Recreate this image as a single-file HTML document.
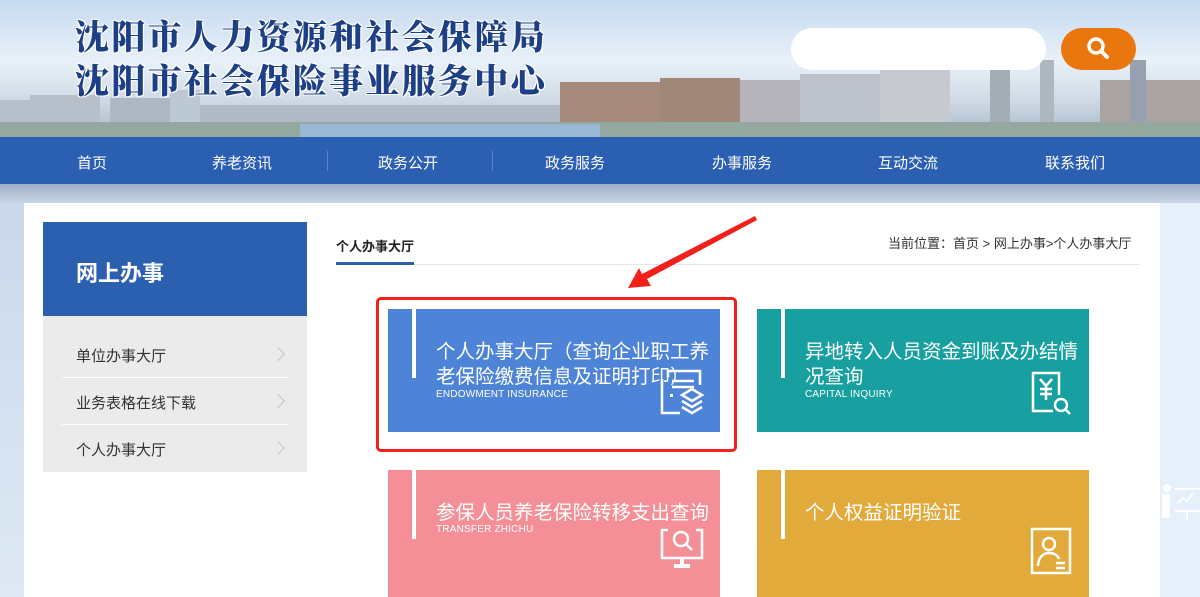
<!DOCTYPE html>
<html><head><meta charset="utf-8">
<style>
*{margin:0;padding:0;box-sizing:border-box}
body{width:1200px;height:597px;overflow:hidden;position:relative;font-family:"Liberation Sans","Noto Sans CJK SC",sans-serif;background:#e6f0fa}
.hdr{position:absolute;left:0;top:0;width:1200px;height:137px;background:linear-gradient(180deg,#c6daf0 0%,#e9f1f9 45%,#d3dde8 70%,#a8b8c8 100%)}
.city{position:absolute;left:0;top:60px;width:1200px;height:77px}
.t1{position:absolute;left:75px;font-family:"Noto Serif CJK SC",serif;font-weight:900;font-size:34px;color:#1d3f86;letter-spacing:2.3px;text-shadow:1px 1px 0 #fff,-1px -1px 0 #fff,1px -1px 0 #fff,-1px 1px 0 #fff}
.search{position:absolute;left:791px;top:28px;width:255px;height:42px;background:#fff;border-radius:21px}
.sbtn{position:absolute;left:1061px;top:28px;width:75px;height:42px;background:#ea760e;border-radius:21px}
.nav{position:absolute;left:0;top:137px;width:1200px;height:47px;background:#2a5fb2;color:#fff;font-size:15px}
.nav span{position:absolute;top:15px}
.nav i{position:absolute;top:14px;width:1px;height:20px;background:#5a82c4}
.haze{position:absolute;left:0;top:184px;width:1200px;height:19px;background:linear-gradient(180deg,#9fb0c6,#c8d5e6)}
.leftbg{position:absolute;left:0;top:203px;width:24px;height:394px;background:linear-gradient(180deg,#c9d8ea,#dfe9f5)}
.panel{position:absolute;left:24px;top:203px;width:1136px;height:394px;background:#fff}
.side{position:absolute;left:43px;top:222px;width:264px;height:94px;background:#2b5fb0;color:#fff;font-size:22px;font-weight:bold;padding:34px 0 0 33px}
.list{position:absolute;left:43px;top:316px;width:264px;height:156px;background:#ebebeb}
.li{position:absolute;left:33px;font-size:15px;color:#333}
.chev{position:absolute;left:230px;width:10px;height:10px;border-right:1.5px solid #c4c4c4;border-top:1.5px solid #c4c4c4;transform:rotate(45deg)}
.sep{position:absolute;left:19px;width:226px;height:1px;background:#fff}
.tab{position:absolute;left:336px;top:236px;font-size:13px;font-weight:bold;color:#222}
.card{position:absolute;width:332px;color:#fff}
.card .bar{position:absolute;left:24px;top:0;width:4px;height:69px;background:#fff}
.card .tx{position:absolute;left:48px;font-size:19.5px;line-height:25px;white-space:nowrap}
.card .en{position:absolute;left:48px;font-size:10px;letter-spacing:.2px}
.card svg{position:absolute}
</style></head><body>
<div class="hdr">
<svg class="city" viewBox="0 0 1200 77" preserveAspectRatio="none">
<g fill="#a6a5ab">
<rect x="0" y="40" width="40" height="37" fill="#b7bfca"/><rect x="30" y="35" width="70" height="42" fill="#b7bfca"/><rect x="110" y="38" width="60" height="39" fill="#aeb8c4"/><rect x="170" y="30" width="30" height="47" fill="#bcc8d4"/>
<rect x="560" y="22" width="100" height="55" fill="#a58a7c"/><rect x="660" y="18" width="80" height="59" fill="#a08878"/><rect x="740" y="20" width="60" height="57" fill="#b4b4ba"/>
<rect x="800" y="14" width="80" height="63" fill="#bec2ca"/><rect x="880" y="10" width="70" height="67" fill="#c6cad0"/><rect x="990" y="5" width="20" height="72" fill="#a4acb6"/><rect x="1040" y="-10" width="14" height="87" fill="#aeb6c0"/>
<rect x="1100" y="20" width="100" height="57" fill="#aaa4a4"/><rect x="1130" y="-5" width="16" height="82" fill="#96a0ae"/>
<rect x="200" y="45" width="360" height="32" fill="#b0b9c4"/>
</g>
<rect x="0" y="62" width="1200" height="15" fill="#94a8a0"/>
<rect x="300" y="64" width="300" height="13" fill="#9ab8d6"/>
</svg>
<div class="t1" style="top:10px">沈阳市人力资源和社会保障局</div>
<div class="t1" style="top:54px">沈阳市社会保险事业服务中心</div>
<div class="search"></div>
<div class="sbtn"><svg width="75" height="42"><circle cx="35" cy="18" r="7" fill="none" stroke="#fff" stroke-width="3.5"/><line x1="40" y1="23" x2="46" y2="29" stroke="#fff" stroke-width="4" stroke-linecap="round"/></svg></div>
</div>
<div class="nav">
<span style="left:77px">首页</span><span style="left:212px">养老资讯</span><i style="left:327px"></i>
<span style="left:378px">政务公开</span><i style="left:492px"></i><span style="left:545px">政务服务</span>
<span style="left:712px">办事服务</span><span style="left:878px">互动交流</span><span style="left:1045px">联系我们</span>
</div>
<div class="haze"></div>
<div class="leftbg"></div>
<div class="panel"></div>
<div class="side">网上办事</div>
<div class="list">
<div class="li" style="top:29px">单位办事大厅</div><div class="chev" style="top:33px"></div>
<div class="sep" style="top:61px"></div>
<div class="li" style="top:76px">业务表格在线下载</div><div class="chev" style="top:80px"></div>
<div class="sep" style="top:108px"></div>
<div class="li" style="top:123px">个人办事大厅</div><div class="chev" style="top:127px"></div>
</div>
<div class="tab">个人办事大厅</div>
<div style="position:absolute;left:336px;top:264px;width:804px;height:1px;background:#e6e6e6"></div>
<div style="position:absolute;left:336px;top:262px;width:78px;height:3px;background:#2b5fb0"></div>
<div style="position:absolute;left:888px;top:233px;font-size:13px;color:#333">当前位置：首页 &gt; 网上办事&gt;个人办事大厅</div>

<div class="card" style="left:388px;top:309px;height:123px;background:#4e84d7">
<div class="bar"></div>
<div class="tx" style="top:31px">个人办事大厅（查询企业职工养<br>老保险缴费信息及证明打印）</div>
<div class="en" style="top:80px">ENDOWMENT INSURANCE</div>
<svg style="left:270px;top:58px" width="50" height="50" viewBox="0 0 50 50" fill="none" stroke="#fff" stroke-width="2.5"><path d="M10 4h32v14M4 12v34h18M10 4v6"/><path d="M14 14h22M14 20h22"/><rect x="12" y="27" width="3" height="3" fill="#fff" stroke="none"/><path d="M34 22l10 6-10 6-10-6z"/><path d="M24 34l10 6 10-6M24 40l10 6 10-6"/></svg>
</div>
<div class="card" style="left:757px;top:309px;height:123px;background:#18a0a1">
<div class="bar"></div>
<div class="tx" style="top:31px">异地转入人员资金到账及办结情<br>况查询</div>
<div class="en" style="top:80px">CAPITAL INQUIRY</div>
<svg style="left:270px;top:58px" width="50" height="50" viewBox="0 0 50 50" fill="none" stroke="#fff" stroke-width="2.5"><path d="M26 44H6V6h26v22"/><path d="M13 12l6 7 6-7M19 19v14M13 22h12M13 27h12"/><circle cx="34" cy="38" r="6"/><path d="M38 42l5 5"/></svg>
</div>
<div class="card" style="left:388px;top:470px;height:127px;background:#f58f97">
<div class="bar"></div>
<div class="tx" style="top:31px">参保人员养老保险转移支出查询</div>
<div class="en" style="top:54px">TRANSFER ZHICHU</div>
<svg style="left:270px;top:54px" width="50" height="50" viewBox="0 0 50 50" fill="none" stroke="#fff" stroke-width="2.5"><path d="M10 6H4v28h40V6h-6"/><circle cx="23" cy="15" r="7"/><path d="M28 20l6 6"/><path d="M24 34v6M16 42h16" stroke-width="4"/></svg>
</div>
<div class="card" style="left:757px;top:470px;height:127px;background:#e2aa3b">
<div class="bar"></div>
<div class="tx" style="top:31px">个人权益证明验证</div>
<svg style="left:272px;top:56px" width="46" height="52" viewBox="0 0 46 52" fill="none" stroke="#fff" stroke-width="2.5"><rect x="3" y="3" width="38" height="44"/><circle cx="20" cy="18" r="6"/><path d="M9 40c0-8 5-13 11-13s9 3 10 6M27 37h9M27 42h9"/></svg>
</div>
<div style="position:absolute;left:376px;top:297px;width:361px;height:155px;border:3px solid #f2201b;border-radius:5px"></div>
<svg style="position:absolute;left:620px;top:210px" width="140" height="80"><path d="M135 6L22 64l-3-6-11 20 23-2-4-7L137 10z" fill="#f2201b"/></svg>
<svg style="position:absolute;left:1160px;top:480px" width="40" height="50" fill="#fff"><circle cx="7" cy="8" r="4"/><rect x="2" y="14" width="8" height="24"/><rect x="15" y="8" width="25" height="2"/><rect x="15" y="30" width="25" height="2"/><rect x="26" y="32" width="2" height="8"/><path d="M17 24l6-6 4 3 6-8" stroke="#fff" fill="none" stroke-width="1.5"/></svg>
</body></html>
